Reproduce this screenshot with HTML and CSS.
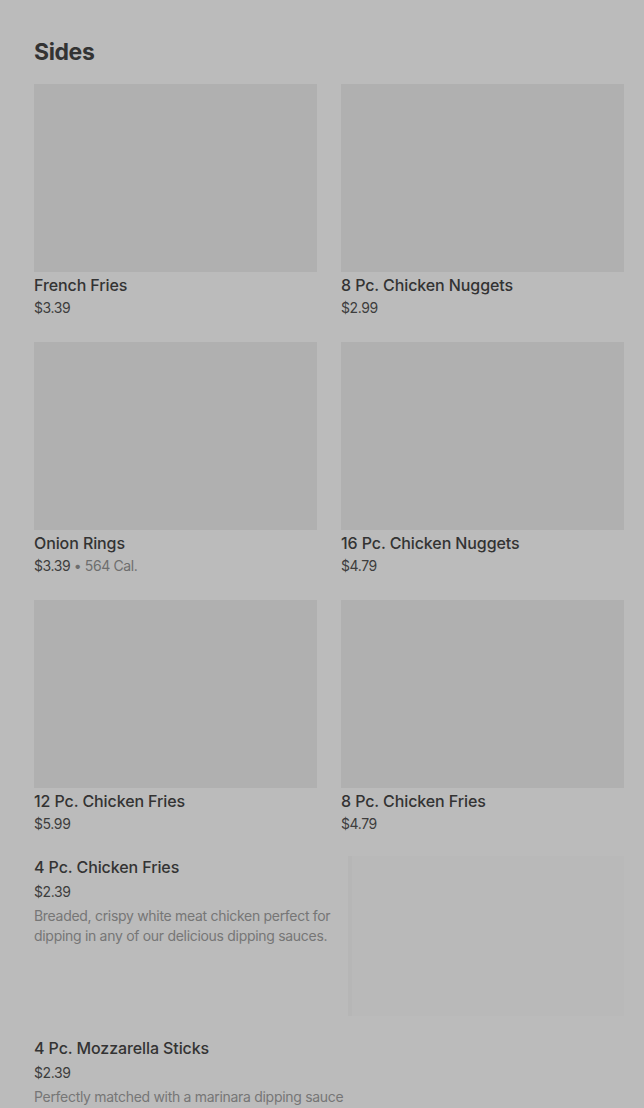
FILE: index.html
```html
<!DOCTYPE html>
<html lang="en">
<head>
  <meta charset="UTF-8" />
  <meta name="viewport" content="width=device-width, initial-scale=1.0">
  <title>Sides</title>
  <link rel="stylesheet" href="styles.css">
</head>
<body>
  <section class="seccion">
    <h2 class="encabezado">Sides</h2>

    <div class="rejilla">
      <div class="tarjeta">
        <div class="foto"></div>
        <div class="nombre">French Fries</div>
        <div class="precio">$3.39</div>
      </div>
      <div class="tarjeta">
        <div class="foto"></div>
        <div class="nombre">8 Pc. Chicken Nuggets</div>
        <div class="precio">$2.99</div>
      </div>
      <div class="tarjeta">
        <div class="foto"></div>
        <div class="nombre">Onion Rings</div>
        <div class="precio">$3.39 <span class="cal">• 564 Cal.</span></div>
      </div>
      <div class="tarjeta">
        <div class="foto"></div>
        <div class="nombre">16 Pc. Chicken Nuggets</div>
        <div class="precio">$4.79</div>
      </div>
      <div class="tarjeta">
        <div class="foto"></div>
        <div class="nombre">12 Pc. Chicken Fries</div>
        <div class="precio">$5.99</div>
      </div>
      <div class="tarjeta">
        <div class="foto"></div>
        <div class="nombre">8 Pc. Chicken Fries</div>
        <div class="precio">$4.79</div>
      </div>
    </div>

    <div class="lista">
      <div class="fila">
        <div class="texto">
          <div class="nombre">4 Pc. Chicken Fries</div>
          <div class="precio">$2.39</div>
          <div class="detalle">Breaded, crispy white meat chicken perfect for dipping in any of our delicious dipping sauces.</div>
        </div>
        <div class="miniatura"></div>
      </div>
      <div class="fila">
        <div class="texto">
          <div class="nombre">4 Pc. Mozzarella Sticks</div>
          <div class="precio">$2.39</div>
          <div class="detalle">Perfectly matched with a marinara dipping sauce</div>
        </div>
      </div>
    </div>
  </section>
</body>
</html>
```

FILE: styles.css
```css
html, body {
  margin: 0;
  padding: 0;
  background: #bbbbbb;
  font-family: Inter, Roboto, 'Noto Sans', Arial, sans-serif;
  color: #333;
  overflow: hidden;
}

.seccion {
  padding: 36px 20px 0 34px;
}

.encabezado {
  margin: 0 0 16px;
  font-size: 23px;
  line-height: 32px;
  font-weight: 700;
  letter-spacing: -0.4px;
  color: #333;
}

.rejilla {
  display: grid;
  grid-template-columns: 283px 283px;
  column-gap: 24px;
  row-gap: 24px;
}

.foto {
  height: 188px;
  background: #b0b0b0;
}

.nombre {
  margin-top: 3px;
  font-size: 16px;
  line-height: 20px;
  font-weight: 500;
  letter-spacing: -0.1px;
  color: #333;
}

.precio {
  margin-top: 3px;
  font-size: 14px;
  line-height: 20px;
  color: #3d3d3d;
  letter-spacing: -0.4px;
}

.cal { color: #6e6e6e; }

.lista {
  margin-top: 19px;
  display: flex;
  flex-direction: column;
  gap: 18px;
}

.fila {
  display: flex;
  gap: 12px;
  min-height: 160px;
}

.texto {
  flex: 1;
  padding-top: 1px;
}

.fila .precio { margin-top: 5px; }

.detalle {
  margin-top: 4px;
  font-size: 14px;
  line-height: 20px;
  color: #767676;
  letter-spacing: -0.3px;
}

.miniatura {
  flex: 0 0 276px;
  height: 160px;
  margin-top: 3px;
  background: #b9b9b9;
  border-left: 4px solid #b6b6b6;
  box-sizing: border-box;
}
```
